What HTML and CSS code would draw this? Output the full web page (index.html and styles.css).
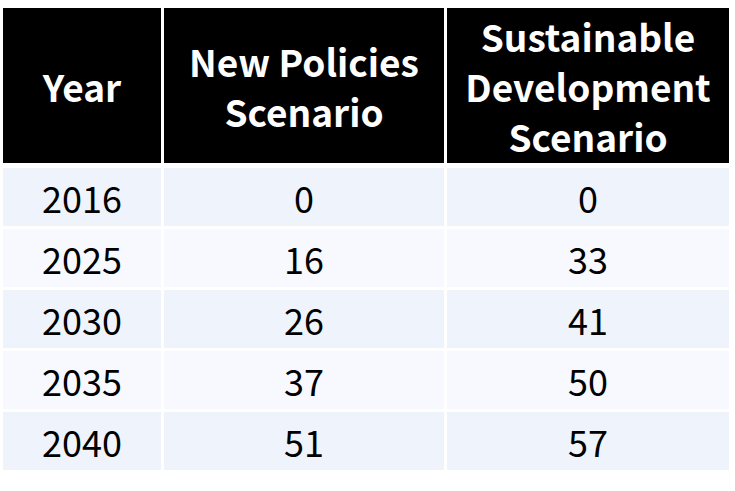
FILE: index.html
```html
<!DOCTYPE html>
<html lang="en">
<head>
<meta charset="utf-8">
<title>Scenarios</title>
<link rel="stylesheet" href="styles.css">
</head>
<body>
<div class="table">
  <div class="cell head">Year</div>
  <div class="cell head">New Policies<br>Scenario</div>
  <div class="cell head">Sustainable<br>Development<br>Scenario</div>

  <div class="cell odd">2016</div><div class="cell odd">0</div><div class="cell odd">0</div>
  <div class="cell even">2025</div><div class="cell even">16</div><div class="cell even">33</div>
  <div class="cell odd">2030</div><div class="cell odd">26</div><div class="cell odd">41</div>
  <div class="cell even">2035</div><div class="cell even">37</div><div class="cell even">50</div>
  <div class="cell odd">2040</div><div class="cell odd">51</div><div class="cell odd">57</div>
</div>
</body>
</html>
```

FILE: styles.css
```css
html, body {
  margin: 0;
  padding: 0;
  background: #ffffff;
}
body {
  font-family: "Noto Sans CJK JP", "Noto Sans", sans-serif;
}
.table {
  margin: 8px 0 0 3px;
  display: grid;
  grid-template-columns: 158px 280px 282px;
  grid-template-rows: 157px repeat(5, 58px);
  column-gap: 3px;
  row-gap: 3px;
}
.cell {
  display: flex;
  align-items: center;
  justify-content: center;
  text-align: center;
  color: #000;
  font-size: 36px;
}
.head {
  background: #000;
  color: #fff;
  font-weight: 700;
  font-size: 37px;
  line-height: 50px;
  margin-bottom: 2px;
}
.odd { background: #eef3fc; }
.even { background: #f7f9fe; }
```
